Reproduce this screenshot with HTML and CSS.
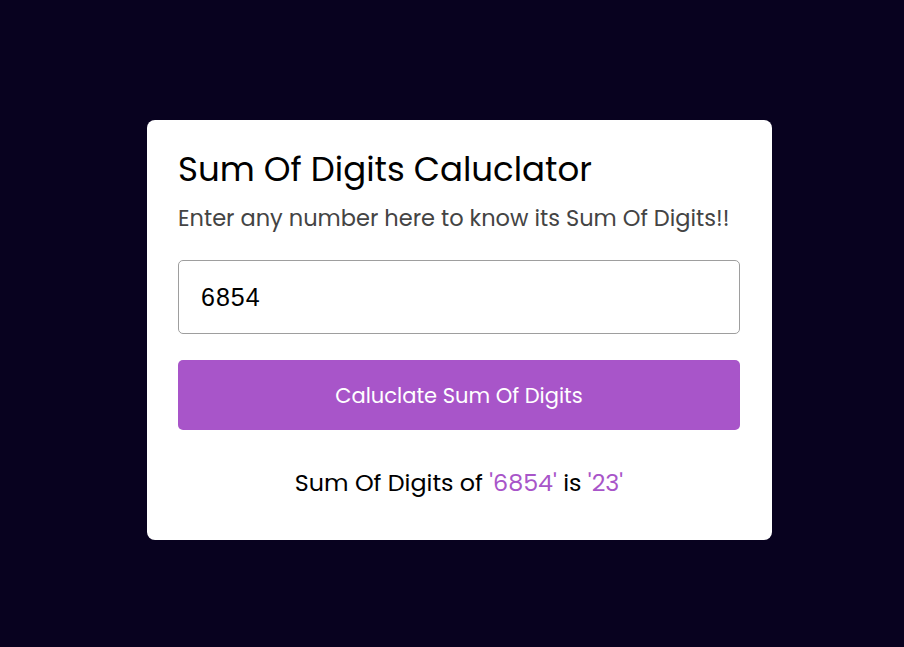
FILE: index.html
```html
<!DOCTYPE html>
<html>
<head>
<meta charset="utf-8">
<link rel="stylesheet" href="styles.css">
</head>
<body>
<main class="page">
  <section class="card">
    <h1 class="title">Sum Of Digits Caluclator</h1>
    <p class="subtitle">Enter any number here to know its Sum Of Digits!!</p>
    <input class="number-input" type="text" value="6854">
    <button class="calc-btn">Caluclate Sum Of Digits</button>
    <p class="result">Sum Of Digits of <span class="hl">'6854'</span> is <span class="hl">'23'</span></p>
  </section>
</main>
</body>
</html>
```

FILE: styles.css
```css
html, body {
  padding: 0;
}
body {
  margin: 8px;
  background: #08021f;
  font-family: Poppins, "Open Sans", "Noto Sans", sans-serif;
}
.page {
  height: 644px;
  padding-left: 15px;
  display: flex;
  align-items: center;
  justify-content: center;
}
.card {
  width: 625px;
  height: 420px;
  flex: none;
  box-sizing: border-box;
  background: #fff;
  border-radius: 8px;
  padding: 25px 32px 0 31px;
  display: flex;
  flex-direction: column;
}
.title {
  margin: 0;
  font-size: 34px;
  font-weight: 400;
  color: #000;
  line-height: 48px;
}
.subtitle {
  margin: 9px 0 0;
  font-size: 22.5px;
  line-height: 32px;
  color: #444;
}
.number-input {
  margin-top: 26px;
  height: 74px;
  box-sizing: border-box;
  border: 1px solid #9e9e9e;
  border-radius: 5px;
  padding: 0 22px;
  font-family: "Liberation Sans", Arial, sans-serif;
  font-size: 25px;
  letter-spacing: 1px;
  color: #000;
  outline: none;
}
.calc-btn {
  margin-top: 26px;
  height: 70px;
  border: none;
  border-radius: 5px;
  background: #a855c9;
  color: #fff;
  font-family: Poppins, "Open Sans", "Noto Sans", sans-serif;
  font-size: 21px;
}
.result {
  margin: 36px 0 0;
  text-align: center;
  font-size: 23.8px;
  line-height: 34px;
  color: #000;
}
.hl {
  color: #a855c9;
}
```
